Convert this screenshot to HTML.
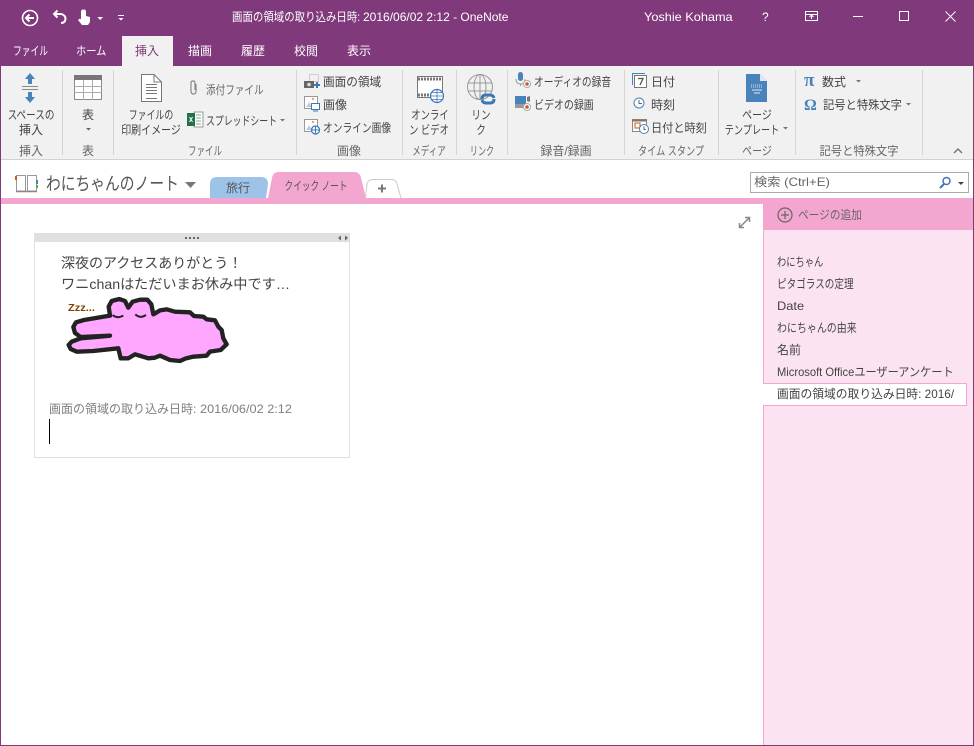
<!DOCTYPE html>
<html lang="ja">
<head>
<meta charset="utf-8">
<style>
html,body{margin:0;padding:0;width:974px;height:746px;overflow:hidden;background:#fff}
body{position:relative;font-family:"Liberation Sans","Noto Sans CJK JP",sans-serif;font-size:12px;color:#444}
.a{position:absolute;white-space:nowrap;line-height:16px;transform:scaleX(var(--s,1));transform-origin:0 0}
.b{position:absolute}
.c{transform:translateX(-50%) scaleX(var(--s,1));transform-origin:50% 0}
.w{color:#fff}
.g{color:#666}
.sep{position:absolute;top:70px;width:1px;height:85px;background:#d4d4d4}
svg{position:absolute;left:0;top:0}
</style>
</head>
<body>
<div class="b" style="left:0;top:0;width:974px;height:66px;background:#80397B"></div>
<div class="b" style="left:122px;top:36px;width:51px;height:30px;background:#f1f1f1"></div>
<div class="b" style="left:1px;top:66px;width:972px;height:93px;background:#f1f1f1"></div>
<div class="b" style="left:1px;top:159px;width:972px;height:1px;background:#d2d2d2"></div>
<div class="b" style="left:0;top:198px;width:974px;height:6px;background:#F3A6CF"></div>
<div class="b" style="left:763px;top:204px;width:211px;height:26px;background:#F3A6CF"></div>
<div class="b" style="left:763px;top:230px;width:211px;height:516px;background:#FBE3F2;box-sizing:border-box;border-left:1px solid #F3A6CF"></div>
<div class="b" style="left:763px;top:383px;width:204px;height:23px;background:#fff;box-sizing:border-box;border:1px solid #F3A6CF;border-left:none"></div>
<div class="b" style="left:0;top:0;width:974px;height:746px;box-sizing:border-box;border:1px solid #80397B;border-top:none"></div>

<div class="sep" style="left:62px"></div><div class="sep" style="left:113px"></div><div class="sep" style="left:296px"></div><div class="sep" style="left:402px"></div><div class="sep" style="left:456px"></div><div class="sep" style="left:507px"></div><div class="sep" style="left:624px"></div><div class="sep" style="left:718px"></div><div class="sep" style="left:795px"></div><div class="sep" style="left:922px"></div>

<!-- title bar -->
<div class="a w" style="left:232px;top:9px;--s:.87">画面の領域の取り込み日時:</div>
<div class="a w" style="left:363px;top:9px">2016/06/02 2:12 - OneNote</div>
<div class="a w" style="left:644px;top:9px;--s:1.06">Yoshie Kohama</div>
<div class="a w" style="left:762px;top:9px">?</div>
<!-- tabs -->
<div class="a w" style="left:13px;top:43px;--s:.73">ファイル</div>
<div class="a w" style="left:76px;top:43px;--s:.85">ホーム</div>
<div class="a" style="left:135px;top:43px;color:#80397B">挿入</div>
<div class="a w" style="left:188px;top:43px">描画</div>
<div class="a w" style="left:241px;top:43px">履歴</div>
<div class="a w" style="left:294px;top:43px">校閲</div>
<div class="a w" style="left:347px;top:43px">表示</div>

<!-- ribbon labels -->
<div class="a c" style="left:31px;top:107px;--s:.8">スペースの</div>
<div class="a c" style="left:31px;top:122px">挿入</div>
<div class="a c g" style="left:31px;top:143px">挿入</div>
<div class="a c" style="left:88px;top:107px">表</div>
<div class="a c g" style="left:88px;top:143px">表</div>
<div class="a c" style="left:151px;top:107px;--s:.74">ファイルの</div>
<div class="a c" style="left:151px;top:122px;--s:.83">印刷イメージ</div>
<div class="a g" style="left:206px;top:82px;--s:.8">添付ファイル</div>
<div class="a" style="left:206px;top:113px;--s:.74">スプレッドシート</div>
<div class="a c g" style="left:205px;top:143px;--s:.71">ファイル</div>
<div class="a" style="left:323px;top:74px;--s:.97">画面の領域</div>
<div class="a" style="left:323px;top:97px">画像</div>
<div class="a" style="left:323px;top:120px;--s:.81">オンライン画像</div>
<div class="a c g" style="left:349px;top:143px">画像</div>
<div class="a c" style="left:430px;top:107px;--s:.78">オンライ</div>
<div class="a c" style="left:429px;top:122px;--s:.78">ン ビデオ</div>
<div class="a c g" style="left:429px;top:143px;--s:.71">メディア</div>
<div class="a c" style="left:481px;top:107px;--s:.8">リン</div>
<div class="a c" style="left:481px;top:122px;--s:.8">ク</div>
<div class="a c g" style="left:482px;top:143px;--s:.67">リンク</div>
<div class="a" style="left:534px;top:74px;--s:.81">オーディオの録音</div>
<div class="a" style="left:534px;top:97px;--s:.83">ビデオの録画</div>
<div class="a c g" style="left:566px;top:143px">録音/録画</div>
<div class="a" style="left:651px;top:74px">日付</div>
<div class="a" style="left:651px;top:97px">時刻</div>
<div class="a" style="left:651px;top:120px;--s:.93">日付と時刻</div>
<div class="a c g" style="left:671px;top:143px;--s:.76">タイム スタンプ</div>
<div class="a c" style="left:757px;top:107px;--s:.83">ページ</div>
<div class="a c" style="left:752px;top:122px;--s:.76">テンプレート</div>
<div class="a c g" style="left:757px;top:143px;--s:.83">ページ</div>
<div class="a" style="left:822px;top:74px">数式</div>
<div class="a" style="left:823px;top:97px;--s:.94">記号と特殊文字</div>
<div class="a c g" style="left:859px;top:143px;--s:.94">記号と特殊文字</div>

<!-- notebook bar -->
<div class="a" style="left:46px;top:172px;font-size:18px;line-height:24px;color:#555;--s:.82">わにちゃんのノート</div>
<svg width="974" height="746" viewBox="0 0 974 746">
<path d="M210 198V184Q210 177 217 177H261Q268 177 268 184L266 198Z" fill="#9DC3E8"/>
<path d="M268 198L272 178Q273 172 279 172H354Q360 172 361 178L366 198Z" fill="#F3A6CF"/>
<path d="M365.500 198L367 184Q368 179.500 373 179.500H392Q396 179.500 397 184L401 198" fill="#fff" stroke="#ccc"/>
</svg>
<div class="a c" style="left:238px;top:180px;color:#555">旅行</div>
<div class="a c" style="left:316px;top:178px;color:#555;--s:.72">クイック ノート</div>
<div class="b" style="left:750px;top:172px;width:219px;height:21px;box-sizing:border-box;border:1px solid #ababab;background:#fff"></div>
<div class="a g" style="left:754px;top:174px;--s:1.1">検索 (Ctrl+E)</div>

<!-- note -->
<div class="b" style="left:34px;top:233px;width:316px;height:225px;box-sizing:border-box;border:1px solid #e0e0e0;background:#fff"></div>
<div class="b" style="left:34px;top:233px;width:316px;height:9px;background:#e0e0e0"></div>
<div class="a" style="left:61px;top:252px;font-size:14px;line-height:22px;color:#444">深夜のアクセスありがとう！</div>
<div class="a" style="left:61px;top:273px;font-size:14px;line-height:22px;color:#444;--s:1.013">ワニchanはただいまお休み中です…</div>
<div class="a" style="left:49px;top:401px;color:#7f7f7f">画面の領域の取り込み日時:</div>
<div class="a" style="left:200px;top:401px;color:#7f7f7f;--s:1.06">2016/06/02 2:12</div>
<div class="b" style="left:49px;top:419px;width:1px;height:25px;background:#000"></div>
<div class="a" style="left:68px;top:302px;font-size:10px;line-height:14px;font-weight:bold;color:#7F4300;--s:1.1">Zzz...</div>

<!-- right pane -->
<div class="a g" style="left:798px;top:207px;--s:.89">ページの追加</div>
<div class="a" style="left:777px;top:254px;--s:.77">わにちゃん</div>
<div class="a" style="left:777px;top:276px;--s:.8">ピタゴラスの定理</div>
<div class="a" style="left:777px;top:298px;--s:1.07">Date</div>
<div class="a" style="left:777px;top:320px;--s:.83">わにちゃんの由来</div>
<div class="a" style="left:777px;top:342px">名前</div>
<div class="a" style="left:777px;top:364px;--s:.93">Microsoft Officeユーザーアンケート</div>
<div class="a" style="left:777px;top:386px;--s:.98">画面の領域の取り込み日時: 2016/</div>

<svg width="974" height="746" viewBox="0 0 974 746">
<!-- QAT -->
<g fill="none" stroke="#fff" stroke-width="1.600">
<circle cx="30" cy="18" r="7.500"/>
<path d="M34 18H26M29.500 14.500L26 18L29.500 21.500" stroke-width="2"/>
<path d="M54 14H61Q65.500 15 65.500 19Q65 23 61 23M57.500 10.500L54 14L57.500 17.500" stroke-width="2"/>
</g>
<path d="M81 11.500Q81 9.500 83.500 9.500Q86 9.500 86 11.500V16L90 17V22L88 25H82L78 20L80 18.500L81 19.500Z" fill="#fff"/>
<path d="M97.500 17H103L100.200 20Z M118 15H124V16H118Z M118.500 18H123.500L121 20.500Z" fill="#fff"/>
<!-- window controls -->
<g fill="none" stroke="#fff">
<rect x="805.500" y="11.500" width="12" height="9"/>
<path d="M805 14.500H818M811.500 19V15M809.500 17L811.500 15L813.500 17"/>
<path d="M853 16.500H863"/>
<rect x="899.500" y="11.500" width="9" height="9"/>
<path d="M945.500 11.500L955.500 21.500M955.500 11.500L945.500 21.500"/>
</g>
<!-- space insert -->
<path d="M30 73L35 79H32V84H28V79H25Z M30 103L35 97H32V92H28V97H25Z" fill="#4A83BC"/>
<path d="M22 86.500H38M22 89.500H38" stroke="#888"/>
<!-- table -->
<rect x="74.500" y="75.500" width="27" height="24" fill="#fff" stroke="#8a8a8a"/>
<rect x="74" y="75" width="28" height="5" fill="#777"/>
<path d="M74 86.500H102M74 92.500H102M83.500 80V100M92.500 80V100" stroke="#aaa"/>
<path d="M86 128H91L88.500 130.500Z" fill="#666"/>
<!-- file printout -->
<path d="M141.500 74.500H154L161.500 82V101.500H141.500Z" fill="#fff" stroke="#777"/>
<path d="M154 74.500V82H161.500M146 84.500H157M146 87.500H157M146 90.500H157M146 93.500H157M146 98.500H157" fill="none" stroke="#777"/>
<!-- clip -->
<path d="M196 84L196 91Q196 94 193.500 94Q191 94 191 91V83Q191 81 193 81Q195 81 195 83V90" fill="none" stroke="#888" stroke-width="1.200"/>
<!-- excel -->
<rect x="194" y="112" width="9" height="15" fill="#fff" stroke="#999"/>
<rect x="187" y="113" width="8" height="13" fill="#217346"/>
<path d="M189.500 117L192.500 122M192.500 117L189.500 122" stroke="#fff"/>
<path d="M196 115H201M196 118H201M196 121H201M196 124H201" stroke="#7ab08f"/>
<path d="M280 119H285L282.500 121.500Z" fill="#777"/>
<!-- image icons -->
<rect x="309.500" y="74.500" width="9" height="7" fill="none" stroke="#aaa" stroke-dasharray="1 1"/>
<rect x="304" y="81" width="10" height="7" fill="#666"/><circle cx="309" cy="84.500" r="1.800" fill="#ddd"/>
<path d="M314 85H320M317 82V88" stroke="#3B78B5" stroke-width="2"/>
<rect x="304.500" y="96.500" width="13" height="12" fill="#fff" stroke="#999"/>
<path d="M306 107L309 102L312 107Z" fill="#b7cde3"/><circle cx="313" cy="99" r="1.200" fill="#ECA35E"/>
<rect x="311.500" y="103.500" width="8" height="6" fill="#fff" stroke="#3B78B5"/><path d="M313 111H318" stroke="#3B78B5"/>
<rect x="304.500" y="119.500" width="13" height="12" fill="#fff" stroke="#999"/>
<path d="M306 130L309 125L312 130Z" fill="#b7cde3"/><circle cx="313" cy="122" r="1.200" fill="#ECA35E"/>
<circle cx="315.500" cy="130" r="4" fill="#fff" stroke="#3B78B5" stroke-width="1.200"/><path d="M311.500 130H319.500M315.500 126V134" stroke="#3B78B5"/>
<!-- video -->
<rect x="417.500" y="76.500" width="25" height="21" fill="#fff" stroke="#777"/>
<path d="M418 79H442M418 95H442" stroke="#777" stroke-width="3" stroke-dasharray="2 1"/>
<circle cx="437" cy="96" r="6.500" fill="#fff" stroke="#3B78B5" stroke-width="1.200"/><path d="M430.500 96H443.500M437 89.500V102.500M432 92.500H442M432 99.500H442" stroke="#3B78B5" stroke-width=".8"/>
<!-- link -->
<g fill="none" stroke="#999"><circle cx="480" cy="87" r="12.500"/><ellipse cx="480" cy="87" rx="6" ry="12.500"/><path d="M468 83H492M468 91H492M480 74.500V99.500"/></g>
<path d="M482 99Q482 95 486 95H490Q493 95 494 98M494 99Q494 103 490 103H486Q483 103 482 100" fill="none" stroke="#3B78B5" stroke-width="3"/>
<!-- audio/video -->
<rect x="518" y="72" width="5" height="9" rx="2.500" fill="#4A83BC"/><path d="M516 79Q516 84 520.500 84Q525 84 525 79M520.500 84V86" fill="none" stroke="#999"/>
<circle cx="527" cy="84" r="3.500" fill="#fff" stroke="#aaa"/><circle cx="527" cy="84" r="1.800" fill="#D2542B"/>
<rect x="515" y="96" width="11" height="8" fill="#4A83BC"/><path d="M515 104H526V108H515Z" fill="#999"/><path d="M527 97L530 96V102L527 101Z" fill="#777"/>
<circle cx="527" cy="107" r="3.500" fill="#fff" stroke="#aaa"/><circle cx="527" cy="107" r="1.800" fill="#D2542B"/>
<!-- time -->
<rect x="634.500" y="75.500" width="12" height="12" fill="#fff" stroke="#777"/>
<path d="M632.500 85V73.500H645" fill="none" stroke="#4A83BC"/>
<path d="M638 78.500H643L640 85" fill="none" stroke="#555" stroke-width="1.300"/>
<circle cx="639" cy="103" r="5" fill="#fff" stroke="#4A83BC"/><path d="M639 100V103.500H642" fill="none" stroke="#666"/>
<rect x="632.500" y="119.500" width="14" height="12" fill="#fff" stroke="#888"/><path d="M632 120.500H647" stroke="#777" stroke-width="2"/>
<rect x="635" y="123" width="5" height="5" fill="none" stroke="#E07B2E" stroke-width="1.300"/>
<circle cx="644" cy="129" r="4.500" fill="#fff" stroke="#4A83BC"/><path d="M644 126.500V129.500H646" fill="none" stroke="#666"/>
<!-- page template -->
<path d="M746 74H760L767 81V102H746Z" fill="#4A83BC"/>
<path d="M760 74L767 81H760Z" fill="#dfe8f2"/>
<path d="M751 85H763M751 87H763" stroke="#cfe0f0" stroke-dasharray="1 1"/><path d="M752 90H762M754 93H760" stroke="#dfe8f2"/>
<path d="M783 127H788L785.500 129.500Z" fill="#777"/>
<!-- equation -->
<text x="804" y="86" font-family="Liberation Serif,serif" font-size="19" font-weight="bold" fill="#4A83BC">π</text>
<text x="804" y="110" font-family="Liberation Serif,serif" font-size="16" font-weight="bold" fill="#4A83BC">Ω</text>
<path d="M856 80H861L858.500 82.500Z M906 103H911L908.500 105.500Z" fill="#777"/>
<path d="M954 153L958 149L962 153" fill="none" stroke="#777" stroke-width="1.500"/>
<!-- notebook icon -->
<path d="M16.500 175.500H25.500V191H16.500ZM27.500 175.500H36.500V191H27.500Z" fill="#fff" stroke="#999"/>
<path d="M16 191.500H37" stroke="#888" stroke-width="1.500"/>
<rect x="15" y="176" width="2" height="4" fill="#D2542B"/><rect x="36" y="180" width="2" height="4" fill="#4A83BC"/><rect x="36" y="185" width="2" height="3" fill="#5FA55A"/>
<path d="M185 182H196L190.500 188Z" fill="#777"/>
<!-- plus tab -->
<path d="M378 188.500H386M382 184.500V192.500" stroke="#777" stroke-width="2"/>
<!-- search icon -->
<circle cx="946.500" cy="181" r="3.500" fill="none" stroke="#3B78B5" stroke-width="1.500"/><path d="M944 184L940 188" stroke="#3B78B5" stroke-width="2"/>
<path d="M958 182H964L961 185Z" fill="#444"/>
<!-- expand -->
<path d="M740 227L749 218M745 217.500H749.500V222M739.500 223V227.500H744" fill="none" stroke="#888" stroke-width="1.500"/>
<!-- add page -->
<circle cx="785" cy="215" r="7" fill="none" stroke="#666" stroke-width="1.200"/><path d="M781 215H789M785 211V219" stroke="#666" stroke-width="1.200"/>
<!-- note handle -->
<path d="M185 237h2v2h-2zM189 237h2v2h-2zM193 237h2v2h-2zM197 237h2v2h-2z" fill="#666"/>
<path d="M341 235.500L338 238L341 240.500Z M345 235.500L348 238L345 240.500Z" fill="#666"/>
<!-- croc -->
<g transform="translate(60,295) scale(.3333)">
<path d="M150 122L62 126L45 114L40 96L48 82L72 75L150 62L146 35L155 18L178 12L195 18L205 38L218 20L240 14L262 14L274 28L280 58L300 46L320 43L345 50L390 52L402 63L430 65L440 73L465 76L475 95L485 105L490 130L500 148L482 165L450 170L440 182L400 185L378 190L360 198L330 195L300 182L285 188L265 190L225 178L205 190L182 190L175 160L100 168L50 170L32 162L26 150L35 140L62 130Z" fill="#FFA6FF" stroke="#222" stroke-width="13" stroke-linejoin="round"/>
<path d="M158 60Q172 72 190 62M226 58Q240 72 258 60" fill="none" stroke="#222" stroke-width="6"/>
</g>
</svg>
</body>
</html>
